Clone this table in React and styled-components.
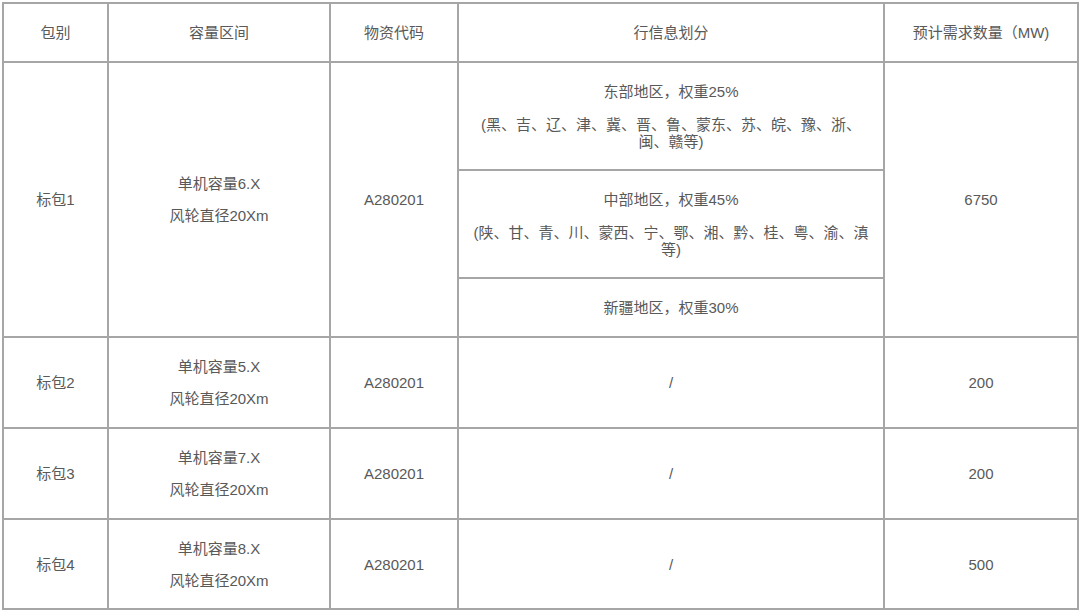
import styled, { createGlobalStyle } from "styled-components";

const Global = createGlobalStyle`
  body {
    margin: 0;
    background: #ffffff;
    font-family: "Liberation Sans", "Noto Sans CJK SC", sans-serif;
  }
`;

const Page = styled.div`
  padding: 2px 0 0 2px;
`;

const Table = styled.table`
  border-collapse: collapse;
  table-layout: fixed;
  width: 1075px;
  color: #595959;
  font-size: 15px;
`;

const Row = styled.tr`
  height: ${(p) => p.h}px;
`;

const Cell = styled.td`
  border: 2px solid #a6a6a6;
  text-align: center;
  vertical-align: middle;
  padding: 0 10px;
  line-height: 17px;
`;

const Head = styled(Cell).attrs({ as: "th" })`
  font-weight: normal;
`;

const Stack = styled.div`
  display: flex;
  flex-direction: column;
  align-items: center;
  gap: ${(p) => p.gap}px;
`;

const Para = styled.p`
  margin: 0;
  line-height: 17px;
`;

const cols = [105, 222, 128, 426, 194];

const rows = [
  { name: "标包2", cap: "5.X", need: "200" },
  { name: "标包3", cap: "7.X", need: "200" },
  { name: "标包4", cap: "8.X", need: "500" },
];

function Spec({ cap }) {
  return (
    <Stack gap={15}>
      <Para>单机容量{cap}</Para>
      <Para>风轮直径20Xm</Para>
    </Stack>
  );
}

export default function App() {
  return (
    <Page>
      <Global />
      <Table>
        <colgroup>
          {cols.map((w, i) => (
            <col key={i} style={{ width: w }} />
          ))}
        </colgroup>
        <thead>
          <Row h={59}>
            <Head>包别</Head>
            <Head>容量区间</Head>
            <Head>物资代码</Head>
            <Head>行信息划分</Head>
            <Head>预计需求数量（MW)</Head>
          </Row>
        </thead>
        <tbody>
          <Row h={108}>
            <Cell rowSpan={3}>标包1</Cell>
            <Cell rowSpan={3}>
              <Spec cap="6.X" />
            </Cell>
            <Cell rowSpan={3}>A280201</Cell>
            <Cell>
              <Stack gap={16}>
                <Para>东部地区，权重25%</Para>
                <Para>(黑、吉、辽、津、冀、晋、鲁、蒙东、苏、皖、豫、浙、闽、赣等)</Para>
              </Stack>
            </Cell>
            <Cell rowSpan={3}>6750</Cell>
          </Row>
          <Row h={108}>
            <Cell>
              <Stack gap={16}>
                <Para>中部地区，权重45%</Para>
                <Para>(陕、甘、青、川、蒙西、宁、鄂、湘、黔、桂、粤、渝、滇等)</Para>
              </Stack>
            </Cell>
          </Row>
          <Row h={59}>
            <Cell>新疆地区，权重30%</Cell>
          </Row>
          {rows.map((r, i) => (
            <Row key={r.name} h={i === 2 ? 90 : 91}>
              <Cell>{r.name}</Cell>
              <Cell>
                <Spec cap={r.cap} />
              </Cell>
              <Cell>A280201</Cell>
              <Cell>/</Cell>
              <Cell>{r.need}</Cell>
            </Row>
          ))}
        </tbody>
      </Table>
    </Page>
  );
}
